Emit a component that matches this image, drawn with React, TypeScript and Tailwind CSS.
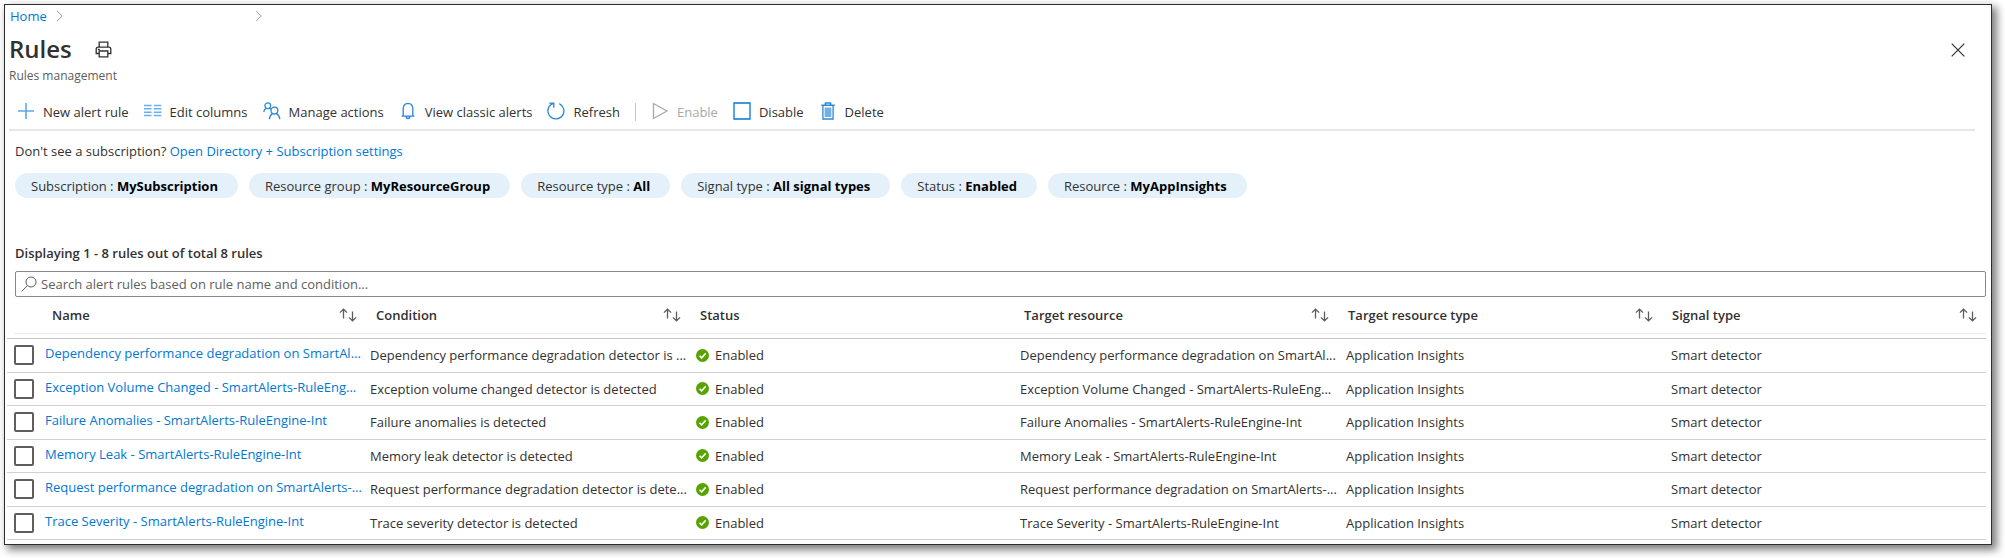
import type { ReactNode } from 'react'

const filters = [
  { label: 'Subscription', value: 'MySubscription' },
  { label: 'Resource group', value: 'MyResourceGroup' },
  { label: 'Resource type', value: 'All' },
  { label: 'Signal type', value: 'All signal types' },
  { label: 'Status', value: 'Enabled' },
  { label: 'Resource', value: 'MyAppInsights' },
]

const columns = [
  { title: 'Name', sortable: true, width: 'w-[321px]', pad: 'pl-[7px]' },
  { title: 'Condition', sortable: true, width: '', pad: 'pl-[10px]' },
  { title: 'Status', sortable: false, width: '', pad: 'pl-[10px]' },
  { title: 'Target resource', sortable: true, width: '', pad: 'pl-[10px]' },
  { title: 'Target resource type', sortable: true, width: '', pad: 'pl-[10px]' },
  { title: 'Signal type', sortable: true, width: '', pad: 'pl-[10px]' },
]

const rules = [
  {
    name: 'Dependency performance degradation on SmartAl...',
    condition: 'Dependency performance degradation detector is ...',
  },
  {
    name: 'Exception Volume Changed - SmartAlerts-RuleEng...',
    condition: 'Exception volume changed detector is detected',
  },
  { name: 'Failure Anomalies - SmartAlerts-RuleEngine-Int', condition: 'Failure anomalies is detected' },
  { name: 'Memory Leak - SmartAlerts-RuleEngine-Int', condition: 'Memory leak detector is detected' },
  {
    name: 'Request performance degradation on SmartAlerts-...',
    condition: 'Request performance degradation detector is dete...',
  },
  { name: 'Trace Severity - SmartAlerts-RuleEngine-Int', condition: 'Trace severity detector is detected' },
]

function Icon({ children, color = 'stroke-[#2b88d8]' }: { children: ReactNode; color?: string }) {
  return (
    <svg viewBox="0 0 18 18" className={`mb-0.5 h-[18px] w-[18px] shrink-0 fill-none ${color}`} strokeWidth="1.3" aria-hidden="true">
      {children}
    </svg>
  )
}

function Chevron() {
  return (
    <svg viewBox="0 0 8 12" className="h-3 w-2 fill-none stroke-[#979593]" aria-hidden="true">
      <path d="M1.2 1l5 5-5 5" />
    </svg>
  )
}

function ToolButton({ icon, label, disabled }: { icon: ReactNode; label: string; disabled?: boolean }) {
  return (
    <button
      type="button"
      disabled={disabled}
      className="flex items-center gap-2 whitespace-nowrap text-[#323130] disabled:text-[#a9a9a9]"
    >
      {icon}
      <span>{label}</span>
    </button>
  )
}

function SortIcon() {
  return (
    <svg viewBox="0 0 18 14" className="h-[14px] w-[18px] fill-none stroke-[#605e5c]" strokeWidth="1.3" aria-hidden="true">
      <path d="M4.500 10.500V1.200M.9 4.600l3.600-3.400 3.600 3.400M13.500 3.500v9.300M9.900 9.400l3.600 3.400 3.600-3.400" />
    </svg>
  )
}

function EnabledIcon() {
  return (
    <svg viewBox="0 0 14 14" className="h-[13px] w-[13px] shrink-0" aria-hidden="true">
      <circle cx="7" cy="7" r="7" fill="#57a300" />
      <path d="M3.800 7.200l2.300 2.300 4.300-4.800" fill="none" stroke="#fff" strokeWidth="1.7" />
    </svg>
  )
}

export default function App() {
  return (
    <div className="bg-white pt-1 pr-[13px] pb-[13px] pl-1 font-['Open_Sans','Noto_Sans',sans-serif] text-[13px] leading-5 text-[#323130]">
      <main className="border border-[#2e2e2e] bg-white pb-1 shadow-[4px_4px_8px_1px_rgba(0,0,0,0.5)]">
        <nav aria-label="Breadcrumb" className="flex h-[22px] items-center pl-[5px]">
          <a href="#home" className="mr-[9px] text-[#0078d4]">
            Home
          </a>
          <Chevron />
          <span className="w-[191px]" />
          <Chevron />
        </nav>

        <header className="flex items-start justify-between pr-[26px] pl-1">
          <div>
            <div className="mt-1 flex h-9 items-center gap-[23px]">
              <h1 className="text-2xl leading-9 font-semibold">Rules</h1>
              <button type="button" aria-label="Print">
                <svg viewBox="0 0 17 17" className="h-[17px] w-[17px] fill-none stroke-[#323130]" strokeWidth="1.3" aria-hidden="true">
                  <path d="M4.200 6.200V1.200h8.600v5M4.200 12.500H1.200V8.200q0-2 2-2h10.600q2 0 2 2v4.300h-3M4.200 10h8.600v5.800H4.200z" />
                  <path d="M2.800 8.400h2" />
                </svg>
              </button>
            </div>
            <p className="text-xs leading-[18px] text-[#605e5c]">Rules management</p>
          </div>
          <button type="button" aria-label="Close" className="mt-4">
            <svg viewBox="0 0 14 14" className="h-[14px] w-[14px] fill-none stroke-[#323130]" strokeWidth="1.2" aria-hidden="true">
              <path d="M.7.7l12.600 12.600M13.300.7L.7 13.300" />
            </svg>
          </button>
        </header>

        <div
          role="toolbar"
          aria-label="Rule commands"
          className="mt-[9px] mr-4 ml-1 flex h-[37px] items-center gap-[15px] border-b-2 border-[#e6e6e6] pl-2"
        >
          <ToolButton
            label="New alert rule"
            icon={
              <Icon color="stroke-[#5ea8e6]">
                <path d="M9 1v16M1 9h16" strokeWidth="1.6" />
              </Icon>
            }
          />
          <ToolButton
            label="Edit columns"
            icon={
              <Icon color="stroke-[#6bb0ec]">
                <path
                  d="M0 3.500h7.600M0 6.800h7.600M0 10.200h7.600M0 13.500h7.600M9.800 3.500h7.600M9.800 6.800h7.600M9.800 10.200h7.600M9.800 13.500h7.600"
                  strokeWidth="1.6"
                />
              </Icon>
            }
          />
          <ToolButton
            label="Manage actions"
            icon={
              <Icon>
                <circle cx="4.800" cy="3.700" r="2.900" />
                <circle cx="11.400" cy="8.600" r="3.400" />
                <path d="M.7 10.200q.4-3 2.700-4M6.400 17.200q.3-4 3-5.600M13.400 11.600q3 1.600 3.400 5.600M6.300 6.200l1.900 1" />
              </Icon>
            }
          />
          <ToolButton
            label="View classic alerts"
            icon={
              <Icon>
                <path d="M2.600 14.200h12.800M4.200 14V6.500q.2-5 4.800-5.200 4.600.2 4.800 5.200V14M7 14.500q.4 2 2 2t2-2" />
              </Icon>
            }
          />
          <ToolButton
            label="Refresh"
            icon={
              <Icon>
                <path d="M12.300 1.700a8 8 0 1 1-7.900.6M2.300 1.200h4.500v4.500M4 2.800l2.600-1.500" />
              </Icon>
            }
          />
          <span className="h-[18px] w-px bg-[#c8c6c4]" />
          <ToolButton
            disabled
            label="Enable"
            icon={
              <Icon color="stroke-[#a9a9a9]">
                <path d="M2.500 1.500v15L16 9z" />
              </Icon>
            }
          />
          <ToolButton
            label="Disable"
            icon={
              <Icon color="stroke-[#0078d4]">
                <path d="M1 1h16v16H1z" />
              </Icon>
            }
          />
          <ToolButton
            label="Delete"
            icon={
              <Icon>
                <path d="M2.300 3.300h13.400M6.500 3.300V1h5v2.300" strokeWidth="1.600" />
                <path d="M3.900 3.500v13.500h10.200V3.500" />
                <path d="M6.300 6.200h5.400v8.100H6.300z" fill="#71afe5" stroke="#71afe5" />
              </Icon>
            }
          />
        </div>

        <div className="pt-2.5 pr-[5px] pl-2.5">
          <p>
            Don't see a subscription?{' '}
            <a href="#subscriptions" className="text-[#0078d4]">
              Open Directory + Subscription settings
            </a>
          </p>

          <div className="mt-3 flex flex-wrap gap-[11px]">
            {filters.map((f) => (
              <button key={f.label} type="button" className="h-[25px] rounded-full bg-[#e4f1fb] pr-5 pl-4 whitespace-nowrap">
                {f.label} : <span className="font-bold text-black">{f.value}</span>
              </button>
            ))}
          </div>

          <h2 className="mt-[45px] font-semibold">Displaying 1 - 8 rules out of total 8 rules</h2>

          <div className="mt-2 flex h-[26px] items-center gap-1 rounded-[2px] border border-[#8a8886] pl-[5px]">
            <svg viewBox="0 0 16 16" className="h-4 w-4 fill-none stroke-[#605e5c]" aria-hidden="true">
              <circle cx="10" cy="6" r="5" />
              <path d="M6.400 9.600L.6 15.400" />
            </svg>
            <input
              type="text"
              aria-label="Search alert rules"
              placeholder="Search alert rules based on rule name and condition..."
              className="h-full min-w-0 flex-1 bg-transparent outline-none placeholder:text-[#605e5c]"
            />
          </div>
        </div>

        <div className="pr-[5px] pl-[2px]">
          <table className="h-[243px] w-full table-fixed border-collapse text-left">
            <thead>
              <tr className="border-b border-[#c8c6c4]">
                <th className="h-[41px] w-[38px] p-0 pb-1 pl-[7px] align-top">
                  <div className="h-[37px] border-b border-[#edebe9]" />
                </th>
                {columns.map((c) => (
                  <th key={c.title} scope="col" className={`h-[41px] p-0 pb-1 align-top font-semibold ${c.width}`}>
                    <div className={`flex h-[37px] items-center justify-between border-b border-[#edebe9] pr-[9px] ${c.pad}`}>
                      <span>{c.title}</span>
                      {c.sortable && (
                        <button type="button" aria-label={`Sort by ${c.title}`}>
                          <SortIcon />
                        </button>
                      )}
                    </div>
                  </th>
                ))}
              </tr>
            </thead>
            <tbody>
              {rules.map((r) => (
                <tr key={r.name} className="border-b border-[#d0d0d0]">
                  <td className="p-0 pl-[7px]">
                    <input
                      type="checkbox"
                      aria-label={`Select ${r.name}`}
                      className="block h-5 w-5 appearance-none rounded-[2px] border-2 border-[#605e5c] bg-white checked:bg-[#0078d4]"
                    />
                  </td>
                  <td className="p-0 pb-1 whitespace-nowrap">
                    <a href="#rule" className="text-[#0078d4]">
                      {r.name}
                    </a>
                  </td>
                  <td className="p-0 pl-1 whitespace-nowrap">{r.condition}</td>
                  <td className="p-0 pl-1.5">
                    <div className="flex items-center gap-1.5">
                      <EnabledIcon />
                      Enabled
                    </div>
                  </td>
                  <td className="p-0 pl-1.5 whitespace-nowrap">{r.name}</td>
                  <td className="p-0 pl-2 whitespace-nowrap">Application Insights</td>
                  <td className="p-0 pl-[9px] whitespace-nowrap">Smart detector</td>
                </tr>
              ))}
            </tbody>
          </table>
        </div>
      </main>
    </div>
  )
}
